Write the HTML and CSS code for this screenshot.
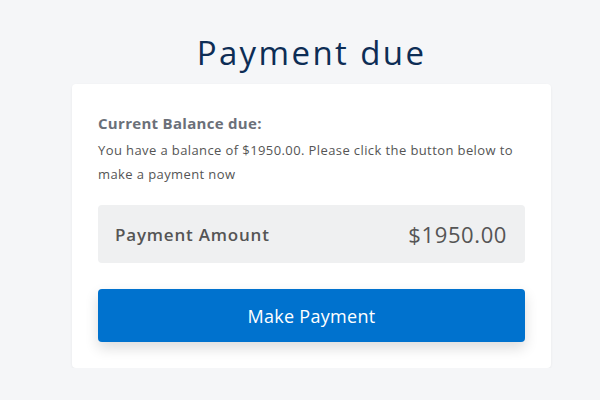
FILE: index.html
```html
<!DOCTYPE html>
<html lang="en">
<head>
<meta charset="utf-8">
<title>Payment due</title>
<link rel="stylesheet" href="styles.css">
</head>
<body>
<main class="page">
  <h1 class="title">Payment due</h1>
  <section class="card">
    <h2 class="label">Current Balance due:</h2>
    <p class="desc">You have a balance of $1950.00. Please click the button below to make a payment now</p>
    <div class="amount">
      <span class="amount-label">Payment Amount</span>
      <span class="amount-value">$1950.00</span>
    </div>
    <button class="pay-btn" type="button">Make Payment</button>
  </section>
</main>
</body>
</html>
```
FILE: styles.css
```css
html, body {
  margin: 0;
  padding: 0;
  background: #f5f6f8;
  font-family: "Open Sans", "Noto Sans", sans-serif;
}
.page {
  width: 479px;
  margin-left: 72px;
  padding-top: 33px;
}
.title {
  margin: 0 0 11px;
  font-size: 33px;
  line-height: 40px;
  font-weight: 400;
  letter-spacing: 2.4px;
  color: #0d2d55;
  text-align: center;
}
.card {
  background: #fff;
  border-radius: 4px;
  box-shadow: 0 1px 3px rgba(0, 0, 0, 0.06);
  padding: 28px 26px 26px;
}
.label {
  margin: 0;
  font-size: 15px;
  line-height: 22px;
  font-weight: 700;
  letter-spacing: 0.3px;
  color: #6b7079;
}
.desc {
  margin: 4px 0 19px;
  font-size: 13px;
  line-height: 24px;
  letter-spacing: 0.4px;
  color: #555;
}
.amount {
  height: 58px;
  box-sizing: border-box;
  padding: 0 18px 0 17px;
  background: #eff0f1;
  border-radius: 4px;
  display: flex;
  align-items: center;
  justify-content: space-between;
  color: #555;
}
.amount-label {
  font-size: 17px;
  font-weight: 600;
  letter-spacing: 0.8px;
}
.amount-value {
  font-size: 22px;
  letter-spacing: 0.6px;
}
.pay-btn {
  display: block;
  width: 100%;
  height: 53px;
  margin-top: 26px;
  border: 0;
  border-radius: 4px;
  background: #0072ce;
  color: #fff;
  font-family: inherit;
  font-size: 18px;
  letter-spacing: 0.3px;
  box-shadow: 0 6px 14px rgba(0, 0, 0, 0.14);
}
```
